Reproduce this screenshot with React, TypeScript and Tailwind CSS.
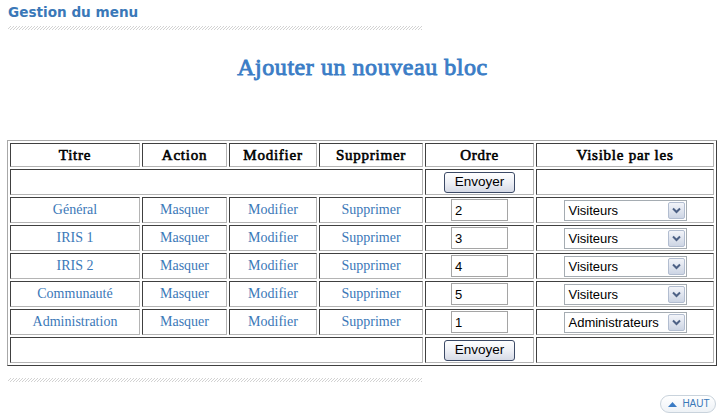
const cell =
  "border border-solid border-t-[#404040] border-l-[#404040] border-b-[#b4b4b4] border-r-[#b4b4b4] p-0 text-center align-middle";

// Liberation Serif has no bold face here, so bold Times is imitated with a stroke
const head = `${cell} h-[24px] text-[15px] font-normal leading-[18px] tracking-[0.05em] text-black [-webkit-text-stroke:0.6px_#000]`;

const rows = [
  { title: "Général", ordre: "2", visible: "Visiteurs" },
  { title: "IRIS 1", ordre: "3", visible: "Visiteurs" },
  { title: "IRIS 2", ordre: "4", visible: "Visiteurs" },
  { title: "Communauté", ordre: "5", visible: "Visiteurs" },
  { title: "Administration", ordre: "1", visible: "Administrateurs" },
];

function Hatch() {
  return (
    <div className="ml-[8px] h-[4px] w-[414px] bg-[repeating-linear-gradient(135deg,#d2d2d2_0px,#d2d2d2_0.7px,transparent_0.7px,transparent_2.12px)]" />
  );
}

function SendButton() {
  return (
    <button
      type="button"
      className="inline-flex h-[21px] w-[71px] items-center justify-center rounded-[3px] border border-[#3c4a66] bg-[linear-gradient(#ffffff,#eef0f6_50%,#d6dae6)] font-['Liberation_Sans',Arial,sans-serif] text-[13.5px] leading-none text-black"
    >
      Envoyer
    </button>
  );
}

function OrderInput({ value }: { value: string }) {
  return (
    <div className="mx-auto flex h-[22px] w-[57px] items-center border border-[#a5a5a5] bg-white pl-[3px] text-left font-['Liberation_Sans',Arial,sans-serif] text-[13px] leading-none text-black">
      {value}
    </div>
  );
}

function VisibleSelect({ value }: { value: string }) {
  return (
    <div className="mx-auto flex h-[21px] w-[123px] items-center justify-between border border-[#a5acb2] bg-white pl-[4px] pr-[1px] font-['Liberation_Sans',Arial,sans-serif] text-[13px] leading-none text-black">
      <span>{value}</span>
      <span className="flex h-[17px] w-[17px] items-center justify-center rounded-[2px] border border-[#b2bdd0] bg-[linear-gradient(#f2f4f9,#cdd5e4)]">
        <svg width="9" height="7" viewBox="0 0 9 7">
          <path d="M1 1.5 L4.5 5 L8 1.5" fill="none" stroke="#4d6185" strokeWidth="2" />
        </svg>
      </span>
    </div>
  );
}

export default function App() {
  return (
    <div className="h-[420px] w-full bg-white font-['Liberation_Serif','Times_New_Roman',serif]">
      {/* Section header */}
      <div className="pl-[8px] pt-[3px] font-['DejaVu_Sans',Verdana,sans-serif] text-[13.6px] font-bold leading-[18px] text-[#3a78b8]">
        Gestion du menu
      </div>
      <div className="mt-[5px]">
        <Hatch />
      </div>

      <h2 className="mt-[22px] pl-[6px] text-center text-[24px] font-normal leading-[30px] tracking-[0.55px] text-[#3b7dc6] [-webkit-text-stroke:0.9px_#3b7dc6]">
        Ajouter un nouveau bloc
      </h2>

      {/* Menu table */}
      <table className="ml-[7px] mt-[58px] w-[710px] table-fixed border-separate border-spacing-[2px] border border-solid border-t-[#a8a8a8] border-l-[#a8a8a8] border-b-[#404040] border-r-[#404040]">
        <thead>
          <tr>
            <th className={`${head} w-[130px]`}>Titre</th>
            <th className={`${head} w-[85px]`}>Action</th>
            <th className={`${head} w-[88px]`}>Modifier</th>
            <th className={`${head} w-[104px]`}>Supprimer</th>
            <th className={`${head} w-[109px]`}>Ordre</th>
            <th className={`${head} w-[178px]`}>Visible par les</th>
          </tr>
        </thead>
        <tbody className="text-[14px] leading-[18px] text-[#3b78b8]">
          <tr>
            <td colSpan={4} className={`${cell} h-[26px]`} />
            <td className={`${cell} h-[26px]`}>
              <SendButton />
            </td>
            <td className={`${cell} h-[26px]`} />
          </tr>
          {rows.map((r) => (
            <tr key={r.title}>
              <td className={`${cell} h-[26px]`}>{r.title}</td>
              <td className={`${cell} h-[26px]`}>Masquer</td>
              <td className={`${cell} h-[26px]`}>Modifier</td>
              <td className={`${cell} h-[26px]`}>Supprimer</td>
              <td className={`${cell} h-[26px]`}>
                <OrderInput value={r.ordre} />
              </td>
              <td className={`${cell} h-[26px]`}>
                <VisibleSelect value={r.visible} />
              </td>
            </tr>
          ))}
          <tr>
            <td colSpan={4} className={`${cell} h-[26px]`} />
            <td className={`${cell} h-[26px]`}>
              <SendButton />
            </td>
            <td className={`${cell} h-[26px]`} />
          </tr>
        </tbody>
      </table>

      <div className="mt-[12px]">
        <Hatch />
      </div>

      {/* Back to top */}
      <div className="mt-[13px] flex justify-end pr-[3px]">
        <a
          href="#"
          className="flex h-[18px] w-[56px] items-center justify-center gap-[5px] rounded-full border border-[#c9d3dc] bg-[linear-gradient(#ffffff,#eef2f6)] pl-[2px] font-['Liberation_Sans',Arial,sans-serif] text-[10px] leading-none text-[#3a78b8]"
        >
          <svg width="9" height="5" viewBox="0 0 9 5">
            <path d="M0 5 L4.5 0 L9 5 Z" fill="#3a7bc4" />
          </svg>
          HAUT
        </a>
      </div>
    </div>
  );
}
